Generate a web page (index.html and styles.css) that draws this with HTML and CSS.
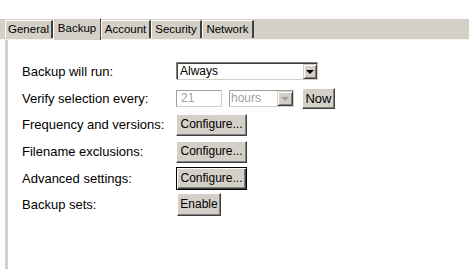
FILE: index.html
```html
<!DOCTYPE html>
<html>
<head>
<meta charset="utf-8">
<link rel="stylesheet" href="styles.css">
</head>
<body>
<div class="tabstrip">
  <div class="tab tab-general">General</div>
  <div class="tab tab-backup selected">Backup</div>
  <div class="tab tab-account">Account</div>
  <div class="tab tab-security">Security</div>
  <div class="tab tab-network">Network</div>
</div>
<div class="page">
  <div class="row">
    <div class="label">Backup will run:</div>
    <div class="combo combo-run">
      <span class="combo-text">Always</span>
      <span class="arrow-btn"><span class="tri"></span></span>
    </div>
  </div>
  <div class="row">
    <div class="label">Verify selection every:</div>
    <div class="ctrls">
      <div class="edit disabled">21</div>
      <div class="combo combo-hours disabled">
        <span class="combo-text">hours</span>
        <span class="arrow-btn"><span class="tri"></span></span>
      </div>
      <div class="btn btn-now">Now</div>
    </div>
  </div>
  <div class="row">
    <div class="label">Frequency and versions:</div>
    <div class="btn btn-conf">Configure...</div>
  </div>
  <div class="row">
    <div class="label">Filename exclusions:</div>
    <div class="btn btn-conf">Configure...</div>
  </div>
  <div class="row">
    <div class="label">Advanced settings:</div>
    <div class="btn btn-conf focused">Configure...</div>
  </div>
  <div class="row">
    <div class="label">Backup sets:</div>
    <div class="btn btn-enable">Enable</div>
  </div>
</div>
</body>
</html>
```
FILE: styles.css
```css
html, body {
  margin: 0;
  padding: 0;
  background: #ffffff;
  width: 469px;
  height: 269px;
  overflow: hidden;
  font-family: "Liberation Sans", Arial, sans-serif;
}
.tabstrip {
  margin-top: 19px;
  height: 21px;
  background: #d4d0c8;
  display: flex;
  align-items: flex-end;
  padding-left: 5px;
  border-bottom: 1px solid #f4f3ef;
  box-sizing: border-box;
}
.tab {
  height: 18px;
  box-sizing: border-box;
  font-size: 11.5px;
  line-height: 17px;
  text-align: center;
  color: #000;
  background: #d4d0c8;
  border-top: 1px solid #ffffff;
  border-left: 1px solid #ffffff;
  border-right: 2px solid #404040;
  margin-bottom: 1px;
}
.tab.selected {
  height: 22px;
  margin-bottom: -1px;
  line-height: 18px;
  border-right: 1px solid #404040;
}
.tab-general { width: 48px; }
.tab-backup { width: 48px; }
.tab-account { width: 50px; }
.tab-security { width: 51px; }
.tab-network { width: 52px; }

.page {
  margin-left: 5px;
  border-left: 3px solid #d4d0c8;
  height: 229px;
  padding-top: 18.5px;
  padding-left: 14px;
  box-sizing: border-box;
}
.row {
  height: 26.6px;
  display: flex;
  align-items: center;
}
.label {
  width: 154px;
  font-size: 13px;
  color: #000;
  white-space: nowrap;
}
.ctrls {
  display: flex;
  align-items: center;
}
.combo {
  position: relative;
  box-sizing: border-box;
  background: #fff;
  border-top: 1px solid #404040;
  border-left: 1px solid #404040;
  border-right: 1px solid #d4d0c8;
  border-bottom: 1px solid #d4d0c8;
  box-shadow: -1px -1px 0 #808080, 1px 1px 0 #ffffff;
  display: flex;
  align-items: center;
  justify-content: space-between;
  font-size: 12px;
  color: #000;
}
.combo-run {
  width: 141px;
  height: 17px;
  margin-left: 1px;
}
.combo-text {
  padding-left: 2px;
  line-height: 15px;
}
.arrow-btn {
  width: 14px;
  height: 15px;
  box-sizing: border-box;
  background: #d4d0c8;
  border-top: 1px solid #d4d0c8;
  border-left: 1px solid #d4d0c8;
  border-right: 1px solid #404040;
  border-bottom: 1px solid #404040;
  box-shadow: inset 1px 1px 0 #ffffff, inset -1px -1px 0 #808080;
  display: flex;
  align-items: center;
  justify-content: center;
}
.tri {
  width: 0;
  height: 0;
  border-left: 4px solid transparent;
  border-right: 4px solid transparent;
  border-top: 4px solid #000;
  margin-top: 1px;
}
.edit {
  box-sizing: border-box;
  width: 46px;
  height: 17px;
  border: 1px solid #a0a0a0;
  border-right-color: #d4d0c8;
  border-bottom-color: #d4d0c8;
  font-size: 12px;
  line-height: 15px;
  padding-left: 4px;
  color: #a0a0a0;
  background: #fff;
}
.combo-hours {
  width: 65px;
  height: 17px;
  margin-left: 7px;
  border: 1px solid #a0a0a0;
  border-right-color: #d4d0c8;
  border-bottom-color: #d4d0c8;
  box-shadow: none;
  color: #a0a0a0;
}
.combo-hours .combo-text { padding-left: 1px; }
.combo-hours .arrow-btn {
  width: 16px;
  height: 15px;
}
.combo-hours .tri { border-top-color: #a0a0a0; }
.btn {
  box-sizing: border-box;
  background: #d4d0c8;
  border-top: 1px solid #ffffff;
  border-left: 1px solid #ffffff;
  border-right: 1px solid #404040;
  border-bottom: 1px solid #404040;
  box-shadow: inset -1px -1px 0 #808080;
  font-size: 12px;
  color: #000;
  text-align: center;
  line-height: 19px;
}
.btn-now {
  width: 33px;
  height: 21px;
  margin-left: 8px;
  font-size: 13px;
}
.btn-conf {
  width: 71px;
  height: 22px;
}
.btn-conf.focused {
  width: 71px;
  height: 23px;
  border: 1px solid #000;
  box-shadow: inset 1px 1px 0 #ffffff, inset -1px -1px 0 #404040, inset -2px -2px 0 #808080;
  line-height: 20px;
}
.btn-enable {
  width: 44px;
  height: 23px;
  margin-left: 1px;
  line-height: 20px;
}
```
